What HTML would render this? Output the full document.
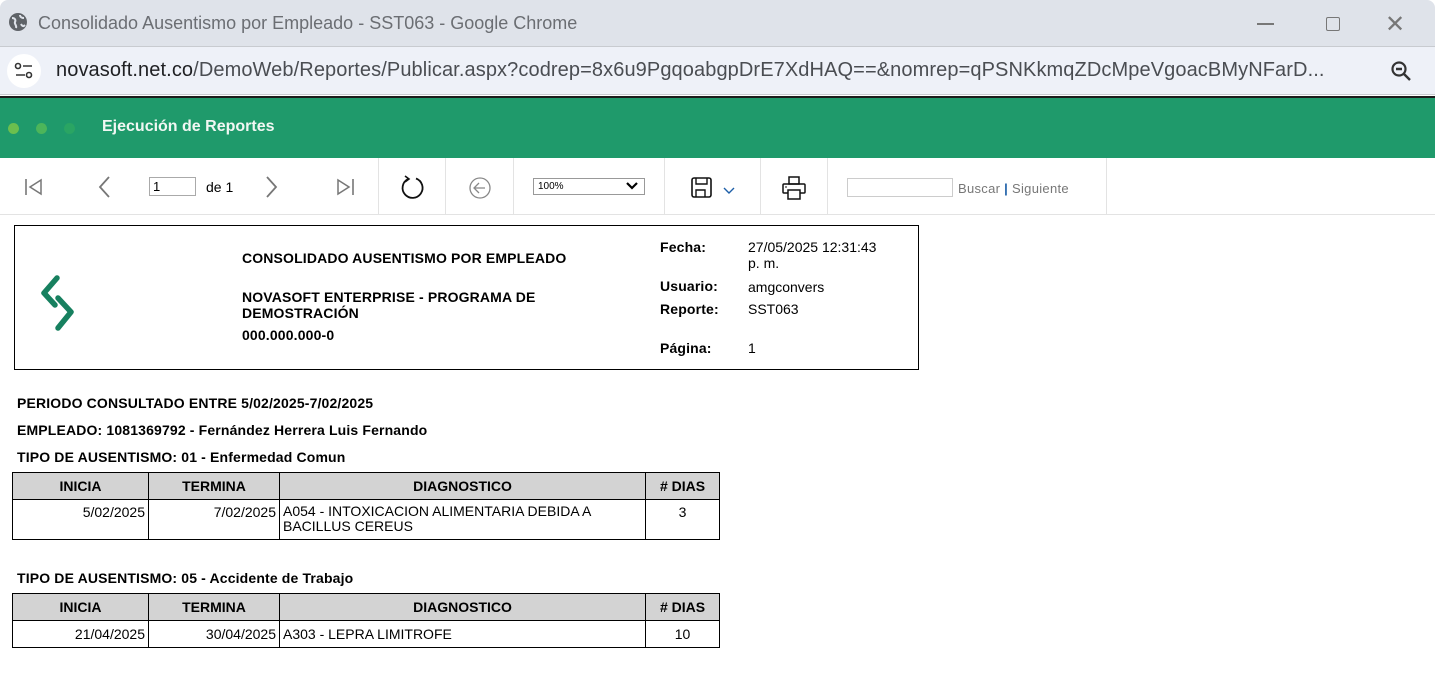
<!DOCTYPE html>
<html><head><meta charset="utf-8"><style>
*{margin:0;padding:0;box-sizing:border-box}
body{width:1435px;height:687px;overflow:hidden;background:#fff;font-family:"Liberation Sans",Arial,sans-serif;position:relative}
.abs{position:absolute}
.title{top:0;left:0;width:1435px;height:46px;background:#dfe3ea;border-radius:8px 8px 0 0}
.addr{top:46px;left:0;width:1435px;height:49px;background:#eef1f8;border-top:1px solid #c8cbd0;border-bottom:1px solid #c8cbd0}
.green{top:96px;left:0;width:1435px;height:62px;background:#1f9a6b;border-top:2px solid #1b1b1b}
.tb{top:158px;left:0;width:1435px;height:57px;border-bottom:1px solid #e3e3e3;background:#fff}
.sep{position:absolute;top:0;width:1px;height:56px;background:#e3e3e3}
.b{font-weight:bold;font-size:14px;color:#000;letter-spacing:0.15px}
.t{font-size:14px;color:#000}
table{border-collapse:collapse;position:absolute;font-size:14px}
td{border:1px solid #000;padding:0 3px}
th{border:1px solid #000;background:#d3d3d3;font-weight:bold;font-size:14px;height:27px}
</style></head><body>
<div class="abs title">
 <svg class="abs" style="left:8px;top:12px" width="20" height="20" viewBox="0 0 20 20"><circle cx="10" cy="10" r="9" fill="#5f6368"/><path d="M4 6c3 0 4 2 3 4s2 3 1 6M12 3c0 2 2 3 4 3M13 12c1 2 2 3 4 1" stroke="#dfe3ea" stroke-width="2" fill="none"/></svg>
 <div class="abs" style="left:38px;top:13px;font-size:18px;color:#6b6e73">Consolidado Ausentismo por Empleado - SST063 - Google Chrome</div>
 <div class="abs" style="left:1257px;top:23px;width:17px;height:1.5px;background:#777"></div>
 <div class="abs" style="left:1326px;top:17px;width:14px;height:14px;border:1.5px solid #777;border-radius:2px"></div>
 <div class="abs" style="left:1385px;top:10px;font-size:24px;color:#777">✕</div>
</div>
<div class="abs addr">
 <div class="abs" style="left:7px;top:7px;width:34px;height:34px;border-radius:50%;background:#fff"></div>
 <svg class="abs" style="left:14px;top:15px" width="20" height="18" viewBox="0 0 20 18"><circle cx="4" cy="4" r="2.5" stroke="#333" stroke-width="1.6" fill="none"/><path d="M9 4h9M2 13h9" stroke="#333" stroke-width="1.6"/><circle cx="15" cy="13" r="2.5" stroke="#333" stroke-width="1.6" fill="none"/></svg>
 <div class="abs" style="left:56px;top:12px;font-size:20px;letter-spacing:0.1px;color:#202124;white-space:nowrap">novasoft.net.co<span style="color:#4a4d52">/DemoWeb/Reportes/Publicar.aspx?codrep=8x6u9PgqoabgpDrE7XdHAQ==&amp;nomrep=qPSNKkmqZDcMpeVgoacBMyNFarD...</span></div>
 <svg class="abs" style="left:1390px;top:13px" width="22" height="22" viewBox="0 0 22 22"><circle cx="9" cy="9" r="6.5" stroke="#333" stroke-width="2.2" fill="none"/><path d="M6 9h6M14 14l6 6" stroke="#333" stroke-width="2.4"/></svg>
</div>
<div class="abs green">
 <div class="abs" style="left:8px;top:25px;width:11px;height:11px;border-radius:50%;background:#6cbf4e"></div>
 <div class="abs" style="left:36px;top:25px;width:11px;height:11px;border-radius:50%;background:#4cb55a"></div>
 <div class="abs" style="left:64px;top:25px;width:11px;height:11px;border-radius:50%;background:#2aa563"></div>
 <div class="abs" style="left:102px;top:20px;font-size:16px;font-weight:bold;color:#f1f7f3">Ejecución de Reportes</div>
</div>
<div class="abs tb">
 <svg class="abs" style="left:24px;top:20px" width="20" height="18" viewBox="0 0 20 18"><path d="M2 1v16" stroke="#777" stroke-width="1.6"/><path d="M17 2L6 9l11 7z" stroke="#777" stroke-width="1.5" fill="none"/></svg>
 <svg class="abs" style="left:97px;top:17px" width="14" height="24" viewBox="0 0 14 24"><path d="M12 2L3 12l9 10" stroke="#777" stroke-width="1.8" fill="none"/></svg>
 <div class="abs" style="left:149px;top:19px;width:47px;height:19px;border:1px solid #aaa;font-size:13px;padding-left:3px;line-height:17px">1</div>
 <div class="abs" style="left:206px;top:21px;font-size:14px">de 1</div>
 <svg class="abs" style="left:265px;top:17px" width="14" height="24" viewBox="0 0 14 24"><path d="M2 2l9 10-9 10" stroke="#777" stroke-width="1.8" fill="none"/></svg>
 <svg class="abs" style="left:335px;top:20px" width="20" height="18" viewBox="0 0 20 18"><path d="M18 1v16" stroke="#777" stroke-width="1.6"/><path d="M3 2l11 7-11 7z" stroke="#777" stroke-width="1.5" fill="none"/></svg>
 <div class="sep" style="left:378px"></div>
 <svg class="abs" style="left:400px;top:17px" width="26" height="26" viewBox="0 0 26 26"><path d="M8 4A10 10 0 1 0 16 3.5" stroke="#111" stroke-width="1.8" fill="none"/><path d="M5 1l4 3-4 3" stroke="#111" stroke-width="1.6" fill="none"/></svg>
 <div class="sep" style="left:445px"></div>
 <svg class="abs" style="left:469px;top:19px" width="22" height="22" viewBox="0 0 22 22"><circle cx="11" cy="11" r="10" stroke="#888" stroke-width="1.3" fill="none"/><path d="M16 11H6M10 6l-5 5 5 5" stroke="#888" stroke-width="1.3" fill="none"/></svg>
 <div class="sep" style="left:513px"></div>
 <div class="abs" style="left:533px;top:20px;width:112px;height:17px;border:1px solid #999;font-size:10px;padding-left:4px;line-height:15px">100%</div>
 <svg class="abs" style="left:626px;top:24px" width="12" height="8" viewBox="0 0 12 8"><path d="M1 1l5 5 5-5" stroke="#000" stroke-width="2.2" fill="none"/></svg>
 <div class="sep" style="left:664px"></div>
 <svg class="abs" style="left:691px;top:19px" width="22" height="22" viewBox="0 0 22 22"><rect x="1" y="1" width="19" height="19" rx="2" stroke="#111" stroke-width="1.6" fill="none"/><path d="M5 1v6h11V1M5 20v-7h9v7" stroke="#111" stroke-width="1.4" fill="none"/></svg>
 <svg class="abs" style="left:722px;top:28px" width="14" height="10" viewBox="0 0 14 10"><path d="M2 2l5 5 5-5" stroke="#1d5fa8" stroke-width="1.4" fill="none"/></svg>
 <div class="sep" style="left:760px"></div>
 <svg class="abs" style="left:782px;top:18px" width="24" height="24" viewBox="0 0 24 24"><rect x="7" y="1" width="10" height="7" stroke="#111" stroke-width="1.5" fill="none"/><rect x="1" y="8" width="22" height="9" rx="1" stroke="#111" stroke-width="1.5" fill="none"/><rect x="6" y="14" width="12" height="9" stroke="#111" stroke-width="1.5" fill="#fff"/><path d="M3 11h2" stroke="#111"/></svg>
 <div class="sep" style="left:827px"></div>
 <div class="abs" style="left:847px;top:20px;width:106px;height:19px;border:1px solid #ccc"></div>
 <div class="abs" style="left:958px;top:23px;font-size:13px;color:#777;letter-spacing:0.3px">Buscar <span style="color:#1d5fa8;font-weight:bold">|</span> Siguiente</div>
 <div class="sep" style="left:1106px"></div>
</div>

<div class="abs" style="left:14px;top:225px;width:905px;height:145px;border:1px solid #000">
 <svg class="abs" style="left:24px;top:47px" width="40" height="60" viewBox="0 0 40 60"><path d="M18 5L5 20l11 12" stroke="#17805f" stroke-width="5.5" stroke-linecap="round" stroke-linejoin="round" fill="none"/><path d="M19 25l13 14-13 16" stroke="#17805f" stroke-width="5.5" stroke-linecap="round" stroke-linejoin="round" fill="none"/></svg>
</div>
<div class="abs b" style="left:242px;top:250px">CONSOLIDADO AUSENTISMO POR EMPLEADO</div>
<div class="abs b" style="left:242px;top:289px;width:330px;line-height:16px">NOVASOFT ENTERPRISE - PROGRAMA DE DEMOSTRACIÓN</div>
<div class="abs b" style="left:242px;top:327px">000.000.000-0</div>
<div class="abs b" style="left:660px;top:239px">Fecha:</div>
<div class="abs t" style="left:748px;top:239px;width:140px;line-height:16px">27/05/2025 12:31:43 p. m.</div>
<div class="abs b" style="left:660px;top:278px">Usuario:</div>
<div class="abs t" style="left:748px;top:279px">amgconvers</div>
<div class="abs b" style="left:660px;top:301px">Reporte:</div>
<div class="abs t" style="left:748px;top:301px">SST063</div>
<div class="abs b" style="left:660px;top:340px">Página:</div>
<div class="abs t" style="left:748px;top:340px">1</div>

<div class="abs b" style="left:17px;top:395px">PERIODO CONSULTADO ENTRE 5/02/2025-7/02/2025</div>
<div class="abs b" style="left:17px;top:422px">EMPLEADO: 1081369792 - Fernández Herrera Luis Fernando</div>
<div class="abs b" style="left:17px;top:449px">TIPO DE AUSENTISMO: 01 - Enfermedad Comun</div>
<table style="left:12px;top:472px;width:708px">
<tr><th style="width:136px">INICIA</th><th style="width:131px">TERMINA</th><th style="width:366px">DIAGNOSTICO</th><th>#&nbsp;DIAS</th></tr>
<tr style="height:40px;vertical-align:top"><td style="text-align:right;padding-top:4px">5/02/2025</td><td style="text-align:right;padding-top:4px">7/02/2025</td><td style="padding-top:4px;line-height:15px">A054 - INTOXICACION ALIMENTARIA DEBIDA A BACILLUS CEREUS</td><td style="text-align:center;padding-top:4px">3</td></tr>
</table>
<div class="abs b" style="left:17px;top:570px">TIPO DE AUSENTISMO: 05 - Accidente de Trabajo</div>
<table style="left:12px;top:593px;width:708px">
<tr><th style="width:136px">INICIA</th><th style="width:131px">TERMINA</th><th style="width:366px">DIAGNOSTICO</th><th>#&nbsp;DIAS</th></tr>
<tr style="height:27px"><td style="text-align:right">21/04/2025</td><td style="text-align:right">30/04/2025</td><td>A303 - LEPRA LIMITROFE</td><td style="text-align:center">10</td></tr>
</table>
</body></html>
